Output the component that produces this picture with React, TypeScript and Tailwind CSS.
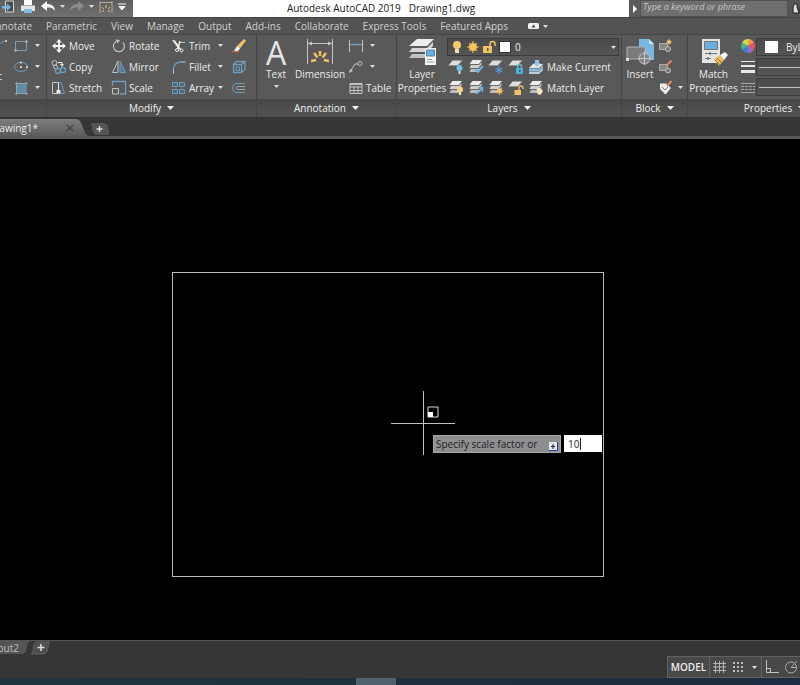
import React, { useState } from 'react';

interface IconProps {
  size?: number;
  children: React.ReactNode;
}

// all small ribbon icons are drawn on a 16x16 grid
function Icon({ size = 16, children }: IconProps) {
  return (
    <svg width={size} height={size} viewBox={`0 0 ${size} ${size}`} fill="none" className="shrink-0" aria-hidden="true">
      {children}
    </svg>
  );
}

function Caret() {
  return (
    <svg width="5" height="3" viewBox="0 0 5 3" className="shrink-0" aria-hidden="true">
      <path d="M0 0h5L2.5 3z" fill="#e0e0e0" />
    </svg>
  );
}

function BigCaret() {
  return (
    <svg width="7" height="4" viewBox="0 0 7 4" className="shrink-0" aria-hidden="true">
      <path d="M0 0h7L3.5 4z" fill="#f0f0f0" />
    </svg>
  );
}

const BLUE = '#6d9dbd';
const GREY = '#c4c4c4';
const GOLD = '#f0c268';

const modifyTools = [
  {
    label: 'Move',
    icon: (
      <Icon>
        <path d="M8 3v10M3 8h10" stroke="#f4f4f4" strokeWidth="1.8" />
        <path d="M8 1l3 3.5H5zM8 15l3-3.500H5zM1 8l3.500-3v6zM15 8l-3.500-3v6z" fill="#f4f4f4" />
      </Icon>
    ),
  },
  {
    label: 'Rotate',
    icon: (
      <Icon>
        <path d="M5 3.5a5.5 5.5 0 1 0 7 1" stroke={GREY} strokeWidth="1.200" />
        <path d="M4.500 1.500l4.500.5-2.500 3.500z" fill={GREY} />
      </Icon>
    ),
  },
  {
    label: 'Trim',
    menu: true,
    icon: (
      <Icon>
        <path d="M1 2l3 .5 6 8.500-2 .5z" fill="#f4f4f4" />
        <path d="M9 3L7 10" stroke="#f4f4f4" strokeWidth="1.500" />
        <path d="M9 4.500h5" stroke={GREY} />
        <circle cx="6" cy="12" r="1.500" stroke="#f4f4f4" />
        <circle cx="10.500" cy="12.500" r="1.500" stroke="#f4f4f4" />
      </Icon>
    ),
  },
  {
    label: 'Copy',
    icon: (
      <Icon>
        <circle cx="3.500" cy="4" r="2.500" stroke={GREY} />
        <path d="M7 3.500h4V6" stroke="#eee" />
        <path d="M9 5h4l-2 3z" fill="#eee" />
        <circle cx="4.500" cy="8" r="2" stroke={GREY} />
        <circle cx="7" cy="12" r="2.500" stroke={BLUE} strokeWidth="1.300" />
        <circle cx="12" cy="11" r="2.500" stroke={BLUE} strokeWidth="1.300" />
      </Icon>
    ),
  },
  {
    label: 'Mirror',
    icon: (
      <Icon>
        <path d="M7 2v11.500H1.500z" stroke={GREY} />
        <path d="M9 2v11.500h5.500z" stroke={BLUE} fill="#527b96" />
      </Icon>
    ),
  },
  {
    label: 'Fillet',
    menu: true,
    icon: (
      <Icon>
        <path d="M2.500 15V10" stroke={GREY} />
        <path d="M2.500 10a7 7 0 0 1 7-7" stroke={BLUE} strokeWidth="1.300" />
        <path d="M9.500 3h5" stroke={GREY} />
      </Icon>
    ),
  },
  {
    label: 'Stretch',
    icon: (
      <Icon>
        <path d="M7 13.500H1.500v-11H7" stroke={GREY} />
        <path d="M7.500 2.500h2.500l3.500 11H7.500" stroke={BLUE} />
        <path d="M7.500 2.500v9" stroke="#eee" />
        <path d="M5.500 10h4v3.500h-4z" fill="#eee" />
      </Icon>
    ),
  },
  {
    label: 'Scale',
    icon: (
      <Icon>
        <path d="M1.500 6V1.500h13v12.500H9" stroke={BLUE} strokeWidth="1.300" />
        <path d="M1.500 8.500h6v5.500h-6z" stroke={GREY} />
      </Icon>
    ),
  },
  {
    label: 'Array',
    menu: true,
    icon: (
      <Icon>
        <path d="M1.500 2.500h5v4h-5zM1.500 9.500h5v4h-5zM8.500 2.500h5v4h-5zM8.500 9.500h5v4h-5z" stroke={BLUE} fill="#4e6878" />
      </Icon>
    ),
  },
];

const modifyExtras = [
  {
    label: 'Erase',
    icon: (
      <Icon>
        <path d="M13 1l2 1.500L9 10.500 6 8z" fill={GOLD} />
        <path d="M6 8l3 2.500L7 13H3z" fill="#f7f7f7" />
        <path d="M1.500 13.500h6" stroke="#d8694a" strokeWidth="1.500" />
      </Icon>
    ),
  },
  {
    label: 'Explode',
    icon: (
      <Icon>
        <path d="M2.500 5.500h8v8h-8zM2.500 5.500l3-3h8.500v8l-3.500 3M10.500 5.500l3.500-3" stroke={BLUE} strokeWidth="1.300" />
        <path d="M5 8h3.500v3.500H5z" stroke={BLUE} />
      </Icon>
    ),
  },
  {
    label: 'Offset',
    icon: (
      <Icon>
        <path d="M14 3.500H6a4.500 4.500 0 0 0 0 9h8" stroke={BLUE} />
        <path d="M14 6.500H7a1.500 1.500 0 0 0 0 3h7" stroke="#a5a5a5" />
      </Icon>
    ),
  },
];

const drawTools = [
  {
    label: 'Rectangle',
    icon: (
      <Icon>
        <path d="M2.500 3.500h11v9h-11z" stroke="#7f9db2" />
        <path d="M1.500 11.500h2v2h-2zM12.500 2.500h2v2h-2z" fill={GREY} />
      </Icon>
    ),
  },
  {
    label: 'Ellipse',
    icon: (
      <Icon>
        <ellipse cx="8" cy="8" rx="6.500" ry="4.500" stroke={BLUE} />
        <path d="M7 7h2v2H7zM7 2.500h2v2H7zM13 7h2v2h-2z" fill={GREY} />
      </Icon>
    ),
  },
  {
    label: 'Hatch',
    icon: (
      <Icon>
        <path d="M4 4h8.500v9H4z" fill="#5f8cab" />
        <path d="M3.500 2v13M13 2v13M2 3.500h13M2 13.500h13" stroke="#93a3ad" />
      </Icon>
    ),
  },
];

function SheetIcon({ stack, children }: { stack?: boolean; children?: React.ReactNode }) {
  return (
    <Icon>
      {stack ? (
        <>
          <path d="M4.500 1H14l-3 4H1.500z" fill="#ececec" />
          <path d="M3 6h8l2.500-3v2.500l-3 3.500h-9z" fill="#cfcfcf" />
          <path d="M3 10h8l2.500-3v2.500l-3 3.500h-9z" fill="#bdbdbd" />
          <path d="M1.500 5.500h9.500l3-4M1.500 9.500h9l3-3.500" stroke="#6c6c6c" strokeWidth=".8" />
        </>
      ) : (
        <>
          <path d="M4.500 1.500H14L10 6.500H.5z" fill="#dedede" />
          <path d="M.5 6.500H10l4-5" stroke="#8f8f8f" />
        </>
      )}
      {children}
    </Icon>
  );
}

const layerTools = [
  {
    label: 'Off',
    icon: (
      <SheetIcon>
        <circle cx="11.500" cy="9" r="3" fill="#6cc3e4" />
        <path d="M10.500 12h2v3h-2z" fill="#c9e3ee" />
      </SheetIcon>
    ),
  },
  {
    label: 'Isolate',
    icon: (
      <SheetIcon stack>
        <path d="M7 10l3 3 5-6" stroke="#6fb2e4" strokeWidth="1.800" />
      </SheetIcon>
    ),
  },
  {
    label: 'Freeze',
    icon: (
      <SheetIcon>
        <circle cx="11" cy="11" r="3" fill="#436a9c" />
        <path d="M11 7v8M7.500 9l7 4M7.500 13l7-4" stroke="#6c98cf" />
      </SheetIcon>
    ),
  },
  {
    label: 'Lock',
    icon: (
      <SheetIcon>
        <path d="M9.500 9V7.500a2 2 0 0 1 4 0V9" stroke="#63bfd9" strokeWidth="1.300" />
        <path d="M8 9h7v6H8z" fill="#48b2d4" />
        <path d="M11 11h1.500v2H11z" fill="#2b6678" />
      </SheetIcon>
    ),
  },
  {
    label: 'Make Current',
    text: true,
    icon: (
      <Icon>
        <path d="M5 5h10l-4 4H1z" fill="#e4e4e4" />
        <path d="M1 9.500h10l4-4V8l-4 4H1z" fill="#86bbe0" />
        <path d="M1 12.500h10l4-4V11l-4 4H1z" fill="#b9cfdf" />
        <path d="M7 1h4v4H7z" fill="#8ec5ea" />
        <path d="M5.500 4h7L9 7.500z" fill="#8ec5ea" />
      </Icon>
    ),
  },
  {
    label: 'Turn On',
    icon: (
      <SheetIcon stack>
        <circle cx="12" cy="9.500" r="3" fill="#f8d27c" />
        <path d="M11 12h2v3h-2z" fill="#f2e4bd" />
      </SheetIcon>
    ),
  },
  {
    label: 'Unisolate',
    icon: (
      <SheetIcon stack>
        <path d="M8 14l6-6M10 7.500h4.500V12" stroke="#6fb2e4" strokeWidth="1.500" />
      </SheetIcon>
    ),
  },
  {
    label: 'Thaw',
    icon: (
      <SheetIcon stack>
        <circle cx="11.500" cy="11" r="2.500" fill={GOLD} />
        <path d="M11.500 7v8M7.500 11h8M9 8.500l5 5M14 8.500l-5 5" stroke={GOLD} strokeWidth=".8" />
      </SheetIcon>
    ),
  },
  {
    label: 'Unlock',
    icon: (
      <SheetIcon>
        <path d="M11 10V8a2 2 0 0 1 4 0v1" stroke={GOLD} strokeWidth="1.300" />
        <path d="M6.500 10H13v5H6.500z" fill={GOLD} />
      </SheetIcon>
    ),
  },
  {
    label: 'Match Layer',
    text: true,
    icon: (
      <SheetIcon stack>
        <path d="M8.500 9l3-1.500L15 11l-2.500 4-3-1z" fill="#efe4c4" />
      </SheetIcon>
    ),
  },
];

const blockTools = [
  {
    label: 'Create Block',
    icon: (
      <Icon>
        <path d="M1.500 5.500h8v6h-8z" fill="#878787" stroke="#adadad" />
        <circle cx="10" cy="11" r="2.500" fill="#777" stroke={GREY} />
        <path d="M11 1v6M8 4h6M9 2l4 4M13 2l-4 4" stroke="#e9a35c" />
        <circle cx="11" cy="4" r="1.500" fill="#f7d58c" />
      </Icon>
    ),
  },
  {
    label: 'Edit Block',
    icon: (
      <Icon>
        <path d="M1.500 5.500h8v6h-8z" fill="#878787" stroke="#adadad" />
        <circle cx="10" cy="11.500" r="2.500" fill="#777" stroke={GREY} />
        <path d="M13.500 1.500L8 7" stroke="#e18a62" strokeWidth="2" />
      </Icon>
    ),
  },
  {
    label: 'Edit Attributes',
    menu: true,
    icon: (
      <Icon>
        <path d="M2 3.500h6l5 4.500-5.500 6.500L2 9z" fill="#ededed" />
        <path d="M4 7l3 3 3-3" stroke="#777" />
        <path d="M13.500 1L9 6" stroke="#e18a62" strokeWidth="2" />
      </Icon>
    ),
  },
];

function PanelTitle({ children }: { children: React.ReactNode }) {
  return (
    <button
      type="button"
      className="flex h-[18px] w-full items-center justify-center gap-1.5 bg-gradient-to-b from-[#484848] to-[#525252] text-[#f0f0f0]"
    >
      {children}
      <BigCaret />
    </button>
  );
}

function Panel({ title, className, children }: { title: string; className: string; children: React.ReactNode }) {
  return (
    <section className={`flex shrink-0 flex-col border-r border-[#454545] ${className}`}>
      <div className="flex h-16 items-start">{children}</div>
      <PanelTitle>{title}</PanelTitle>
    </section>
  );
}

const ribbonTabs = [
  'Parametric',
  'View',
  'Manage',
  'Output',
  'Add-ins',
  'Collaborate',
  'Express Tools',
  'Featured Apps',
];

function TitleBar() {
  return (
    <header className="flex h-[18px] items-stretch border-b border-[#444]">
      <div className="flex w-[133px] shrink-0 items-center gap-1 bg-gradient-to-b from-[#5e5e5e] to-[#707070] pb-1">
        <button type="button" aria-label="Save As">
          <Icon>
            <path d="M5.500 2h8v11h-8z" fill="#4b4b4b" stroke="#d5d5d5" />
            <path d="M2 7h5V4.500L11 8l-4 4V9.500H2z" fill="#72b7e6" />
          </Icon>
        </button>
        <button type="button" aria-label="Plot">
          <Icon>
            <path d="M4 1h8v5H4z" fill="#fafafa" />
            <path d="M1 6h14v6H1z" fill="#e2e2e2" />
            <path d="M4 10h8v4H4z" fill="#83bde3" />
            <path d="M1 6.500h14" stroke="#a8a8a8" />
          </Icon>
        </button>
        <button type="button" aria-label="Undo" className="flex items-center gap-1">
          <Icon>
            <path d="M1 7l6-5v3c5 0 7.500 2 8 7-2-3-4-3.500-8-3.500V12z" fill="#fafafa" />
          </Icon>
          <Caret />
        </button>
        <button type="button" aria-label="Redo" className="flex items-center gap-1">
          <Icon>
            <path d="M15 7L9 2v3c-5 0-7.500 2-8 7 2-3 4-3.500 8-3.500V12z" fill="#8c8c8c" />
          </Icon>
          <Caret />
        </button>
        <button type="button" aria-label="Dimension">
          <Icon>
            <path d="M2 2v12M14 2v12M2 3.500h12" stroke="#b9aa92" />
            <path d="M8 6v3M4 8l2 2M12 8l-2 2M4 12h2M10 12h2" stroke={GOLD} />
          </Icon>
        </button>
        <button type="button" aria-label="Customize Quick Access Toolbar">
          <svg width="8" height="8" viewBox="0 0 8 8" aria-hidden="true">
            <path d="M0 1h8M1 3.500h6L4 7z" stroke="#f4f4f4" fill="#f4f4f4" />
          </svg>
        </button>
      </div>
      <h1 className="flex flex-1 items-center justify-center gap-2 bg-white pb-0.5 text-[#222]">
        <span>Autodesk AutoCAD 2019</span>
        <span>Drawing1.dwg</span>
      </h1>
      <button type="button" aria-label="Collapse search" className="flex w-[11px] shrink-0 items-center justify-center bg-[#5c5c5c]">
        <svg width="4" height="8" viewBox="0 0 4 8" aria-hidden="true">
          <path d="M0 0l4 4-4 4z" fill="#fff" />
        </svg>
      </button>
      <input
        type="text"
        aria-label="Search"
        placeholder="Type a keyword or phrase"
        className="w-[148px] shrink-0 border border-[#515151] bg-[#6e6e6e] px-0.5 pb-1 text-[9px] italic placeholder:text-[#c6c6c6] focus:outline-none"
      />
      <button type="button" aria-label="Find" className="flex w-3 shrink-0 items-center overflow-hidden bg-[#555] pl-1">
        <Icon>
          <path d="M2 3h3v3l2 6H1V7zM9 3h3v3l2 6H8V7z" fill="#ddd" stroke="#222" />
        </Icon>
      </button>
    </header>
  );
}

function RibbonTabs() {
  return (
    <nav className="flex h-[17px] items-center gap-3.5 overflow-hidden whitespace-nowrap border-b border-[#454545] bg-[#535353] text-[#cfcfcf]">
      <button type="button" className="flex w-8 shrink-0 justify-end overflow-hidden">
        Annotate
      </button>
      {ribbonTabs.map((tab) => (
        <button type="button" key={tab} className="shrink-0">
          {tab}
        </button>
      ))}
      <button type="button" aria-label="Ribbon options" className="ml-1.5 flex items-center gap-1">
        <svg width="11" height="6" viewBox="0 0 11 6" aria-hidden="true">
          <rect width="11" height="6" rx="1.500" fill="#f0f0f0" />
          <path d="M3.500 4.500L5.500 1.500 7.500 4.500z" fill="#444" />
        </svg>
        <Caret />
      </button>
    </nav>
  );
}

function Ribbon() {
  return (
    <div className="flex overflow-hidden whitespace-nowrap border-b border-[#333] bg-[#595959] text-[#ececec]">
      <section className="flex w-[47px] shrink-0 flex-col border-r border-[#454545]">
        <div className="flex h-16">
          <div className="flex w-[13px] flex-col justify-between overflow-hidden py-1">
            <svg width="8" height="8" viewBox="0 0 8 8" aria-hidden="true">
              <path d="M0 5c1-2 3-3 7-3" stroke={BLUE} fill="none" />
              <path d="M5 1h2v2H5z" fill={GREY} />
            </svg>
            <span className="flex w-0.5 justify-end overflow-hidden pb-3">Arc</span>
          </div>
          <div className="grid auto-rows-[21px] content-start">
            {drawTools.map((tool) => (
              <button type="button" key={tool.label} aria-label={tool.label} className="flex items-center gap-1.5">
                {tool.icon}
                <Caret />
              </button>
            ))}
          </div>
        </div>
        <div className="h-[18px] bg-gradient-to-b from-[#484848] to-[#525252]" />
      </section>

      <Panel title="Modify" className="w-[210px]">
        <div className="grid auto-rows-[21px] grid-cols-[60px_60px_52px] pl-1">
          {modifyTools.map((tool) => (
            <button type="button" key={tool.label} className="flex items-center gap-0.5">
              {tool.icon}
              <span className="flex-1 text-left">{tool.label}</span>
              {tool.menu && <Caret />}
            </button>
          ))}
        </div>
        <div className="grid auto-rows-[21px] pl-2">
          {modifyExtras.map((tool) => (
            <button type="button" key={tool.label} aria-label={tool.label} className="flex items-center">
              {tool.icon}
            </button>
          ))}
        </div>
      </Panel>

      <Panel title="Annotation" className="w-[140px]">
        <button type="button" className="flex w-[38px] flex-col items-center pt-1 leading-[14px]">
          <span className="text-[32px] leading-7 text-[#e4e4e4]" aria-hidden="true">
            A
          </span>
          Text
          <span className="pt-1">
            <Caret />
          </span>
        </button>
        <button type="button" className="flex w-[50px] flex-col items-center pt-1 leading-[14px]">
          <Icon size={28}>
            <path d="M1.500 0v25M26.500 0v25" stroke={GREY} />
            <path d="M2 4.500h24" stroke={GREY} />
            <path d="M2 4.500l4-2v4zM26 4.500l-4-2v4z" fill={GREY} />
            <path d="M14 12v5M8 14l3.500 4.500M20 14l-3.500 4.500M5 22l5-1M23 22l-5-1" stroke={GOLD} strokeWidth="2.500" />
          </Icon>
          Dimension
        </button>
        <div className="grid auto-rows-[21px] pl-[3px]">
          <button type="button" aria-label="Linear" className="flex items-center gap-1.5">
            <Icon>
              <path d="M1.500 2v12M14.500 2v12" stroke={GREY} />
              <path d="M2 6.500h12" stroke={BLUE} strokeWidth="1.500" />
            </Icon>
            <Caret />
          </button>
          <button type="button" aria-label="Leader" className="flex items-center gap-1.5">
            <Icon>
              <path d="M2 13l5-8h3" stroke={GREY} />
              <circle cx="12" cy="4.500" r="2" stroke={GREY} />
              <path d="M1 14l1-4 3 2z" fill={GREY} />
            </Icon>
            <Caret />
          </button>
          <button type="button" className="flex items-center gap-0.5">
            <Icon>
              <path d="M2 3.500h12v10H2zM2 7h12M2 10.500h12M6 6v7.500M10 6v7.500" stroke={GREY} />
              <path d="M2 3h12v2H2z" fill={GREY} />
            </Icon>
            Table
          </button>
        </div>
      </Panel>

      <Panel title="Layers" className="w-[225px]">
        <button type="button" className="flex w-[50px] flex-col items-center pt-1 leading-[14px]">
          <Icon size={28}>
            <path d="M9 0h17l-7 7H1z" fill="#ececec" />
            <path d="M4 9h15l6-6v4l-6 6H1z" fill="#d4d4d4" />
            <path d="M4 15h15l6-6v4l-6 6H1z" fill="#c2c2c2" />
            <path d="M17 9h11v17H17z" fill="#f4f4f4" />
            <path d="M18.500 11h8v6h-8z" fill="#69aee0" stroke="#4d85b0" />
            <path d="M19 20.500h5M19 23h7" stroke="#8d979d" />
          </Icon>
          <span>
            Layer
            <br />
            Properties
          </span>
        </button>
        <div className="flex flex-1 flex-col pr-0.5">
          <label className="mt-[3px] flex h-[18px] items-center border border-[#3a3a3a] bg-gradient-to-b from-[#4a4a4a] to-[#555] pl-px">
            <Icon>
              <circle cx="8" cy="6" r="4" fill="#f6ca69" />
              <path d="M6 10h4v4H6z" fill="#f2deb0" />
            </Icon>
            <Icon>
              <circle cx="8" cy="8" r="4" fill="#f6c35d" />
              <path d="M8 2v12M2 8h12M4 4l8 8M12 4l-8 8" stroke="#f6c35d" />
            </Icon>
            <Icon>
              <path d="M9 7V5a2.500 2.500 0 0 1 5 0v2" stroke={GOLD} strokeWidth="1.500" />
              <path d="M2 7h9v7H2z" fill={GOLD} />
              <path d="M6 9h1.500v3H6z" fill="#6f5727" />
            </Icon>
            <span className="mx-0.5 h-3 w-3 border border-[#333] bg-white" />
            <select aria-label="Layer" className="flex-1 appearance-none pl-0.5 text-[10px] focus:outline-none">
              <option>0</option>
            </select>
            <span className="pr-0.5">
              <Caret />
            </span>
          </label>
          <div className="grid auto-rows-[21px] grid-cols-[20px_20px_20px_20px_1fr]">
            {layerTools.map((tool) => (
              <button type="button" key={tool.label} aria-label={tool.label} className="flex items-center gap-[3px] pl-px">
                {tool.icon}
                {tool.text && tool.label}
              </button>
            ))}
          </div>
        </div>
      </Panel>

      <Panel title="Block" className="w-[66px]">
        <button type="button" className="flex w-9 flex-col items-center pt-1 leading-[14px]">
          <Icon size={28}>
            <path d="M13 0h10l5 5v16H13z" fill="#7ab8e4" />
            <path d="M23 0l5 5h-5z" fill="#c6e2f4" />
            <path d="M1 8h18v12H1z" fill="#7b7b7b" stroke="#b4b4b4" />
            <path d="M0 19h3v3H0z" fill="#ddd" />
            <circle cx="18.500" cy="19.500" r="5.500" fill="#858585" stroke="#c6c6c6" />
            <path d="M18.500 13v13M12 19.500h13" stroke="#c6c6c6" />
          </Icon>
          Insert
        </button>
        <div className="grid auto-rows-[21px]">
          {blockTools.map((tool) => (
            <button type="button" key={tool.label} aria-label={tool.label} className="flex items-center gap-1">
              {tool.icon}
              {tool.menu && <Caret />}
            </button>
          ))}
        </div>
      </Panel>

      <Panel title="Properties" className="w-[174px]">
        <button type="button" className="flex w-[51px] flex-col items-center pt-1 leading-[14px]">
          <Icon size={28}>
            <path d="M2 0h18v24H2z" fill="#e4e4e4" />
            <path d="M4.500 2.500h13v8h-13z" fill="#69aee0" stroke="#777" />
            <path d="M5 14.500h12M5 19.500h6" stroke="#777" />
            <path d="M10 13v3M8 18v3" stroke="#555" />
            <path d="M14 20l6-4 4 5-5 6z" fill="#e9bd62" />
            <path d="M15 21l5 5M17 19l5 5" stroke="#8d6c2c" />
            <path d="M20 16l5-3 3 3-4 5z" fill="#f4f4f4" />
          </Icon>
          <span className="text-center">
            Match
            <br />
            Properties
          </span>
        </button>
        <div className="grid auto-rows-[21px] pl-px">
          <span className="flex items-center">
            <Icon>
              <path d="M8 8V1a7 7 0 0 1 6 3.500z" fill="#f29b45" />
              <path d="M8 8l6-3.500a7 7 0 0 1 0 7z" fill="#e3556d" />
              <path d="M8 8l6 3.500A7 7 0 0 1 8 15z" fill="#a767c4" />
              <path d="M8 8v7a7 7 0 0 1-6-3.500z" fill="#3f7fd9" />
              <path d="M8 8l-6 3.500a7 7 0 0 1 0-7z" fill="#3fb68f" />
              <path d="M8 8L2 4.500A7 7 0 0 1 8 1z" fill="#d4d655" />
            </Icon>
          </span>
          <span className="flex items-center">
            <Icon>
              <path d="M1 2.500h14" stroke="#e8e8e8" />
              <path d="M1 7h14" stroke="#e8e8e8" strokeWidth="2" />
              <path d="M1 12.500h14" stroke="#e8e8e8" strokeWidth="3" />
            </Icon>
          </span>
          <span className="flex items-center">
            <Icon>
              <path d="M1 3.500h14M1 12.500h14" stroke="#a5a5a5" />
              <path d="M1 6.500h14M1 9.500h14" stroke="#a5a5a5" strokeDasharray="3 1" />
            </Icon>
          </span>
        </div>
        <div className="flex flex-1 flex-col gap-0.5 pt-[3px]">
          <button type="button" className="flex h-[18px] items-center gap-2 border border-[#3d3d3d] bg-gradient-to-b from-[#4a4a4a] to-[#555] pl-2">
            <span className="h-3 w-[13px] bg-white" />
            ByLayer
          </button>
          <button type="button" aria-label="Lineweight" className="flex h-[18px] items-center border border-[#3d3d3d] bg-gradient-to-b from-[#4a4a4a] to-[#555] px-0.5">
            <span className="h-px w-full bg-[#bdbdbd]" />
          </button>
          <button type="button" aria-label="Linetype" className="flex h-[18px] items-center border border-[#3d3d3d] bg-gradient-to-b from-[#4a4a4a] to-[#555] px-0.5">
            <span className="h-px w-full bg-[#bdbdbd]" />
          </button>
        </div>
      </Panel>
    </div>
  );
}

function FileTabs() {
  return (
    <div className="flex h-[21px] items-end border-b-[3px] border-[#585858] bg-[#363636]">
      <div className="relative flex h-[17px] w-[90px] shrink-0 items-center text-[#ececec]">
        <svg className="absolute inset-0" width="90" height="17" viewBox="0 0 90 17" aria-hidden="true">
          <defs>
            <linearGradient id="tab" x1="0" y1="0" x2="0" y2="1">
              <stop offset="0" stopColor="#7c7c7c" />
              <stop offset="1" stopColor="#5c5c5c" />
            </linearGradient>
          </defs>
          <path d="M0 0h76c8 0 6 17 14 17H0z" fill="url(#tab)" />
        </svg>
        <button type="button" className="relative flex w-[38px] justify-end overflow-hidden whitespace-nowrap">
          Drawing1*
        </button>
        <button type="button" aria-label="Close Drawing1" className="relative ml-7">
          <svg width="8" height="8" viewBox="0 0 8 8" aria-hidden="true">
            <path d="M1 1l6 6M7 1L1 7" stroke="#474747" strokeWidth="1.500" />
          </svg>
        </button>
      </div>
      <button type="button" aria-label="New drawing">
        <svg width="20" height="14" viewBox="0 0 20 14" aria-hidden="true">
          <path d="M1 1h12c5 0 6 5 6 12H6C3 13 2 6 1 1z" fill="#555" />
          <path d="M9.500 4v6M6.500 7h6" stroke="#dedede" strokeWidth="1.500" />
        </svg>
      </button>
    </div>
  );
}

function Canvas() {
  const [factor, setFactor] = useState('10');

  return (
    <main className="relative flex-1 overflow-hidden bg-black">
      <div className="absolute left-[172px] top-[133px] h-[305px] w-[432px] border border-[#b9b9b9]" />
      {/* crosshair */}
      <div className="absolute left-[391px] top-[284px] h-px w-16 bg-[#c2c2c2]" />
      <div className="absolute left-[423px] top-[252px] h-16 w-px bg-[#c2c2c2]" />
      <svg className="absolute left-[427px] top-[267px]" width="12" height="12" viewBox="0 0 12 12" aria-hidden="true">
        <path d="M1 1h10v10H1z" stroke="#dcdcdc" fill="none" />
        <path d="M1 6h5v5H1z" fill="#fff" />
      </svg>
      {/* dynamic input prompt */}
      <div className="absolute left-[433px] top-[296px] flex items-start gap-[3px]">
        <label htmlFor="factor" className="flex h-[18px] w-32 items-center justify-between border border-[#a5a5a5] bg-[#8f8f92] px-0.5 text-[#1d1d1d]">
          Specify scale factor or
          <svg width="9" height="9" viewBox="0 0 9 9" className="mt-1" aria-hidden="true">
            <path d="M0 0h9v9H0z" fill="#e4e6f0" />
            <path d="M8.500 0v8.500H0" stroke="#2c3590" fill="none" />
            <path d="M4 2v5M2 4.500h4" stroke="#222" fill="none" />
          </svg>
        </label>
        <div className="flex h-[17px] w-[38px] items-center bg-white pl-1">
          <input
            id="factor"
            type="text"
            size={2}
            value={factor}
            onChange={(e) => setFactor(e.target.value)}
            className="w-3 text-[10px] text-[#222] focus:outline-none"
          />
          <span className="h-3 w-px bg-[#222]" />
        </div>
      </div>
    </main>
  );
}

function StatusBar() {
  return (
    <footer className="bg-[#363636]">
      <div className="flex h-4 items-start border-t border-[#555]">
        <div className="relative flex h-[14px] w-[30px] items-center text-[#bcbcbc]">
          <svg className="absolute inset-0" width="30" height="14" viewBox="0 0 30 14" aria-hidden="true">
            <path d="M0 0h30c-4 2-2 13-8 13H0z" fill="#545454" />
          </svg>
          <button type="button" className="relative flex w-[19px] justify-end overflow-hidden">
            Layout2
          </button>
        </div>
        <button type="button" aria-label="New layout">
          <svg width="20" height="14" viewBox="0 0 20 14" aria-hidden="true">
            <path d="M7 1h13c-3 3-1 12-7 12H1C5 11 2 1 7 1z" fill="#4e4e4e" stroke="#606060" />
            <path d="M11 3v7M7.500 6.500h7" stroke="#dedede" strokeWidth="1.500" />
          </svg>
        </button>
      </div>
      <div className="flex h-[22px] justify-end overflow-hidden">
        <div className="flex items-stretch border border-r-0 border-[#636363] bg-[#484848] text-[#ededed]">
          <button type="button" className="w-[42px] border-r border-[#636363] font-semibold">
            MODEL
          </button>
          <button type="button" aria-label="Grid" className="flex w-[18px] items-center justify-center">
            <Icon>
              <path d="M4.500 2v12M8.500 2v12M12.500 2v12M2 4.500h13M2 8h13M2 11.500h13" stroke="#b5b5b5" />
            </Icon>
          </button>
          <button type="button" aria-label="Snap" className="flex w-[34px] items-center justify-between border-r border-[#636363] pl-0.5 pr-1">
            <Icon>
              <path d="M3 3h2v2H3zM7 3h2v2H7zM11 3h2v2h-2zM3 7h2v2H3zM7 7h2v2H7zM11 7h2v2h-2zM3 11h2v2H3zM7 11h2v2H7zM11 11h2v2h-2z" fill="#bdbdbd" />
            </Icon>
            <Caret />
          </button>
          <button type="button" aria-label="Ortho" className="flex w-5 items-center justify-center">
            <Icon>
              <path d="M2.500 1v12.500H15M2.500 9.500h4v4" stroke="#c4c4c4" />
            </Icon>
          </button>
          <button type="button" aria-label="Polar" className="flex w-[18px] items-center justify-center overflow-hidden">
            <Icon>
              <circle cx="8" cy="8.500" r="5.500" stroke="#aaa" />
              <path d="M14 2L8 8.500h6" stroke="#aaa" />
            </Icon>
          </button>
        </div>
      </div>
      <div className="flex h-[7px] bg-gradient-to-r from-[#20353e] to-[#1d2c40]">
        <div className="ml-[356px] w-10 bg-[#4f626d]" />
      </div>
    </footer>
  );
}

export default function App() {
  return (
    <div className="flex min-h-screen w-full flex-col overflow-hidden bg-[#363636] font-['Open_Sans',sans-serif] text-[10px] leading-[14px]">
      <TitleBar />
      <RibbonTabs />
      <Ribbon />
      <FileTabs />
      <Canvas />
      <StatusBar />
    </div>
  );
}
